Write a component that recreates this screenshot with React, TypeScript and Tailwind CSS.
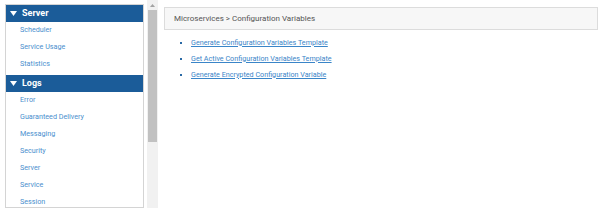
import React from 'react';

/* ─── DATA ─── */

const sections = [
  { title: 'Server', items: ['Scheduler', 'Service Usage', 'Statistics'] },
  {
    title: 'Logs',
    items: ['Error', 'Guaranteed Delivery', 'Messaging', 'Security', 'Server', 'Service', 'Session'],
  },
];

const links = [
  'Generate Configuration Variables Template',
  'Get Active Configuration Variables Template',
  'Generate Encrypted Configuration Variable',
];

/* ─── SIDEBAR ─── */

function Sidebar() {
  return (
    <div className="flex h-full w-[160px] shrink-0">
      <div className="ml-[5px] mt-[4px] w-[139px] overflow-hidden border border-[#d4d4d4] bg-white">
        {sections.map((s) => (
          <div key={s.title}>
            <div className="flex h-[17px] items-center gap-[5px] bg-[#1b5c99] pl-[4px] text-[9px] font-bold text-white">
              <svg width="7" height="5" viewBox="0 0 7 5" className="fill-white">
                <path d="M0 0h7L3.5 5z" />
              </svg>
              {s.title}
            </div>
            <ul className="pb-[2px]">
              {s.items.map((it) => (
                <li key={it} className="flex h-[17px] items-center pl-[14px] text-[7.2px] text-[#4a8fce]">
                  {it}
                </li>
              ))}
            </ul>
          </div>
        ))}
      </div>

      {/* scrollbar */}
      <div className="ml-[3px] flex h-full w-[11px] flex-col bg-[#f1f1f1]">
        <div className="flex h-[10px] items-center justify-center">
          <svg width="5" height="3" viewBox="0 0 5 3" className="fill-[#a3a3a3]">
            <path d="M2.5 0L5 3H0z" />
          </svg>
        </div>
        <div className="mx-[1px] h-[132px] bg-[#c1c1c1]" />
      </div>
    </div>
  );
}

/* ─── MAIN ─── */

export default function App() {
  return (
    <div className="flex h-[208px] w-[602px] overflow-hidden bg-white font-['Roboto',sans-serif]">
      <Sidebar />
      <main className="flex-1 pl-[4px] pr-[4px] pt-[7px]">
        <div className="flex h-[23px] items-center border border-[#dcdcdc] bg-[#f7f7f7] pl-[9px] text-[8px] text-[#555]">
          Microservices &gt; Configuration Variables
        </div>
        <ul className="mt-[5px] flex flex-col">
          {links.map((l) => (
            <li key={l} className="flex h-[16px] items-center pl-[16px]">
              <span className="mr-[9px] h-[2px] w-[2px] bg-[#2a6aa6]" />
              <a href="#" className="text-[7.2px] text-[#3a85c8] underline">
                {l}
              </a>
            </li>
          ))}
        </ul>
      </main>
    </div>
  );
}
